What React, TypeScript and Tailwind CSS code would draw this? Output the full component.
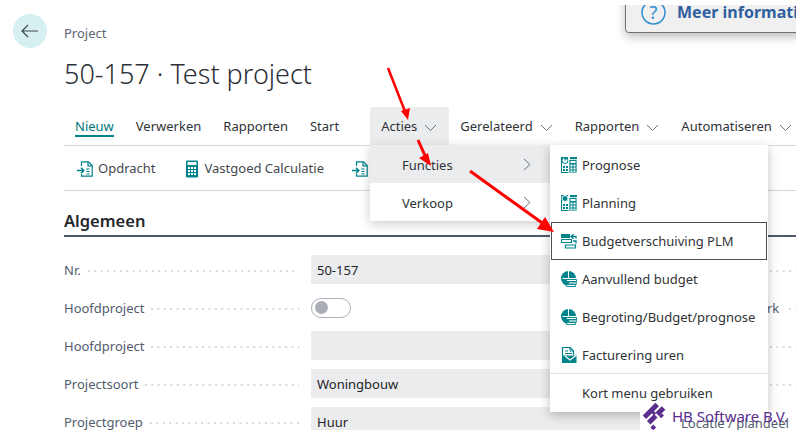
import React from "react";

const teal = "#00838a";

const DocArrow = () => (
  <svg width="16" height="16" viewBox="0 0 16 16" fill="none" stroke={teal} strokeWidth="1.2">
    <path d="M4.5 5V0.8h7l3.7 3.7v10.7H4.5V13" />
    <path d="M11 0.8v4h4.2" />
    <path d="M0 9.5h6.5M4 6.8l2.8 2.7L4 12.2" strokeWidth="1.5" />
    <path d="M9 8h3.5M9.5 10.5h3M9.5 13h3" />
  </svg>
);

const Calculator = () => (
  <svg width="16" height="18" viewBox="0 0 16 18">
    <rect x="2" y="0.5" width="12" height="17" rx="1" fill={teal} />
    <rect x="3.5" y="2" width="9" height="3" fill="#fff" />
    <path d="M4 7h2v2H4zM7 7h2v2H7zM10 7h2v2h-2zM4 10h2v2H4zM7 10h2v2H7zM10 10h2v2h-2zM4 13h2v2H4zM7 13h2v2H7zM10 13h2v2h-2z" fill="#fff" />
  </svg>
);

const Chart = ({ solid }: { solid?: boolean }) => (
  <svg width="16" height="16" viewBox="0 0 16 16">
    <rect x="0.5" y="0.5" width="9" height="15" fill="none" stroke={teal} />
    <rect x="0" y="0" width="16" height="6" fill={teal} />
    <rect x="7" y="0" width="2" height="6" fill="#fff" />
    <circle cx="4" cy="3.5" r="3" fill={solid ? teal : "#fff"} stroke={solid ? "#fff" : teal} strokeWidth="1" />
    {!solid && <path d="M4 3.5V0.5H7" stroke={teal} fill={teal} />}
    <path d="M2 9h2v2H2zM5 9h2v2H5zM2 12h2v2H2zM5 12h2v2H5z" fill={teal} />
    <rect x="8" y="2.5" width="8" height="13.5" fill={teal} stroke="#fff" strokeWidth="0.8" />
    <rect x="9.5" y="4" width="5" height="2" fill="#fff" />
    <path d="M9.5 7.5h2v2h-2zM12.5 7.5h2v2h-2zM9.5 10.5h2v2h-2zM12.5 10.5h2v2h-2zM9.5 13.5h2v1.5h-2zM12.5 13.5h2v1.5h-2z" fill="#fff" />
  </svg>
);

const Shift = () => (
  <svg width="16" height="16" viewBox="0 0 16 16" fill="none" stroke={teal}>
    <rect x="0.5" y="1.5" width="8" height="3" fill={teal} />
    <path d="M0.5 6.5h10v3h-10z" strokeWidth="1.2" />
    <path d="M4.5 12h10v3h-10z" strokeWidth="1.2" />
    <path d="M15 5.5V3.5h-4M12.5 1.2L10 3.5l2.5 2.3" strokeWidth="1.3" />
    <path d="M12 8h3v2.5" strokeWidth="1.3" />
  </svg>
);

const Pie = () => (
  <svg width="16" height="16" viewBox="0 0 16 16">
    <circle cx="7.5" cy="7.5" r="7.5" fill={teal} />
    <path d="M7.5 0v7.5H15M7.5 7.5L1.5 7.5" stroke="#fff" fill="none" />
    <path d="M5.5 8.5h10v2h-10zM7.5 11h8.5v2h-8.5zM5.5 13.5h9v2h-9z" fill="#fff" stroke={teal} strokeWidth="0.9" />
  </svg>
);

const Invoice = () => (
  <svg width="16" height="17" viewBox="0 0 16 17" fill="none" stroke={teal}>
    <path d="M1.5 16V0.5h7.5l3.5 3.5v4" strokeWidth="1.2" />
    <path d="M9 0.5V4h3.5M4 4h3M4 6.5h7" />
    <path d="M3 8.5h12.5V16H1.5V8.5z" fill={teal} stroke="none" />
    <path d="M4 9l5 4 6-4.5" stroke="#fff" strokeWidth="1.1" />
  </svg>
);

const Chevron = () => (
  <svg width="13" height="13" viewBox="0 0 13 13" fill="none" stroke="#6b7280" strokeWidth="1">
    <path d="M1 4l5.5 5.5L12 4" />
  </svg>
);

const Arrow = () => (
  <svg width="8" height="13" viewBox="0 0 8 13" fill="none" stroke="#6b7280">
    <path d="M1 1l6 5.5L1 12" />
  </svg>
);

const Tab = ({ label, active, menu, open }: { label: string; active?: boolean; menu?: boolean; open?: boolean }) => (
  <div className={`h-[38px] pt-[2px] flex items-center gap-[7px] px-[11px] rounded-t-[3px] ${open ? "bg-[#ebecee] pr-[12px]" : ""}`}>
    <span className={`relative ${active ? "text-[#00767c]" : "text-[#2f3338]"}`}>
      {label}
      {active && <span className="absolute left-0 right-0 top-[18px] h-[2px] bg-[#00838a]" />}
    </span>
    {menu && <Chevron />}
  </div>
);

const Action = ({ icon, label }: { icon: React.ReactNode; label: string }) => (
  <div className="flex items-center gap-[5px] text-[#44484e]">
    <span className="w-[16px] flex justify-center">{icon}</span>
    <span>{label}</span>
  </div>
);

const Dots = ({ className }: { className: string }) => (
  <span className={`h-[2px] bg-[linear-gradient(to_right,#d5d7da_2px,transparent_2px)] bg-[length:6.4px_2px] ${className}`} />
);

const Field = ({ label, value, toggle, right, rightDots }: { label: string; value?: string; toggle?: boolean; right?: string; rightDots?: boolean }) => (
  <div className="h-[29px] flex items-center">
    <div className="w-[247px] flex items-center shrink-0 pr-[12px] text-[#505c6d]">
      <span className="whitespace-nowrap pt-[2px]">{label}</span>
      <Dots className="flex-1 ml-[7px] mt-[3px]" />
    </div>
    {toggle ? (
      <div className="w-[349px] shrink-0">
        <div className="w-[40px] h-[20px] rounded-full border border-[#a9aeb7] flex items-center px-[3px] bg-white">
          <span className="w-[13px] h-[13px] rounded-full bg-[#a9aeb7]" />
        </div>
      </div>
    ) : (
      <div className="w-[349px] h-[29px] pt-[2px] shrink-0 bg-[#ebecee] px-[6px] flex items-center text-[#1f2328]">{value}</div>
    )}
    {right && <span className="ml-[107px] pt-[2px] text-[#505c6d]">{right}</span>}
    {rightDots && <Dots className="ml-[110px] w-[30px] mt-[3px]" />}
    {right && <Dots className="ml-[10px] w-[10px] mt-[3px]" />}
  </div>
);

const SubItem = ({ icon, label, focused }: { icon?: React.ReactNode; label: string; focused?: boolean }) => (
  <div className={`h-[38px] flex items-center gap-[5px] pl-[10px] text-[#2f3338] ${focused ? "outline outline-1 outline-[#4b4f54] -outline-offset-1 bg-white" : ""}`}>
    <span className="w-[16px] flex justify-center">{icon}</span>
    <span className="pt-[1px]">{label}</span>
  </div>
);

export default function App() {
  return (
    <div className="w-[801px] h-[435px] bg-white overflow-hidden">
      <div className="relative w-[796px] h-[430px] overflow-hidden bg-white flex text-[13px] font-['Noto_Sans','Open_Sans',sans-serif]">
        <div className="w-[64px] shrink-0 pl-[13px] pt-[14px]">
          <div className="w-[34px] h-[34px] rounded-full bg-[#d6eff1] flex items-center justify-center">
            <svg width="18" height="14" viewBox="0 0 18 14" fill="none" stroke="#3f4650" strokeWidth="1.2">
              <path d="M1 7h16M7 1L1 7l6 6" />
            </svg>
          </div>
        </div>

        <div className="flex-1 min-w-0 pt-[24px]">
          <div className="h-[18px] leading-[18px] text-[#5c6675]">Project</div>
          <h1 className="mt-[12px] h-[40px] leading-[40px] text-[27px] font-light text-[#2d3035] whitespace-nowrap">50-157 · Test project</h1>

          <div className="mt-[13px] h-[38px] flex items-center border-b border-[#d3d5d9] box-content">
            <Tab label="Nieuw" active />
            <Tab label="Verwerken" />
            <Tab label="Rapporten" />
            <Tab label="Start" />
            <span className="ml-[10px] mr-[10px] w-px h-[23px] bg-[#b9bcc1]" />
            <Tab label="Acties" menu open />
            <Tab label="Gerelateerd" menu />
            <Tab label="Rapporten" menu />
            <Tab label="Automatiseren" menu />
          </div>

          <div className="h-[45px] pt-[2px] flex items-center gap-[28px] pl-[13px] border-b border-[#d3d5d9] whitespace-nowrap">
            <Action icon={<DocArrow />} label="Opdracht" />
            <Action icon={<Calculator />} label="Vastgoed Calculatie" />
            <Action icon={<DocArrow />} label="Opdracht" />
          </div>

          <div className="mt-[18px] h-[24px] leading-[24px] text-[16.5px] font-semibold text-[#26282c]">Algemeen</div>
          <div className="h-[2px] mt-[2px] bg-[#505a6b]" />

          <div className="mt-[18px] flex flex-col gap-[9px] whitespace-nowrap">
            <Field label="Nr." value="50-157" rightDots />
            <Field label="Hoofdproject" toggle right="rk" />
            <Field label="Hoofdproject" rightDots />
            <Field label="Projectsoort" value="Woningbouw" rightDots />
            <Field label="Projectgroep" value="Huur" />
          </div>
        </div>

        {/* melding rechtsboven */}
        <div className="absolute left-[625px] top-[-8px] w-[200px] h-[41px] pl-[15px] pb-[8px] flex items-end gap-[11px] bg-[#f0f0f0] border border-[#6f7378] rounded-[4px] shadow-[0_4px_10px_rgba(0,0,0,0.25)]">
          <svg width="25" height="25" viewBox="0 0 25 25" fill="none" className="mb-[-1px]">
            <circle cx="12.5" cy="12.5" r="11.5" stroke="#2f8fd0" strokeWidth="1.5" />
            <text x="12.5" y="19" textAnchor="middle" fontSize="18" fill="#2f8fd0">?</text>
          </svg>
          <span className="text-[16px] font-bold text-[#2f5f9e] whitespace-nowrap leading-[24px]">Meer informatie</span>
        </div>
        <div className="absolute left-[600px] top-0 w-[196px] h-[5px] bg-white" />

        {/* Acties menu */}
        <div className="absolute left-[370px] top-[145px] w-[180px] bg-white shadow-[0_3px_10px_rgba(0,0,0,0.2)] text-[#2f3338]">
          <div className="h-[38px] bg-[#ebecee] flex items-center justify-between pl-[32px] pr-[19px]">
            <span className="pt-[4px]">Functies</span>
            <Arrow />
          </div>
          <div className="h-[38px] flex items-center justify-between pl-[32px] pr-[19px]">
            <span className="pt-[4px]">Verkoop</span>
            <Arrow />
          </div>
        </div>

        {/* Functies submenu */}
        <div className="absolute left-[550px] top-[145px] w-[218px] h-[267px] bg-white shadow-[0_3px_10px_rgba(0,0,0,0.25)] pt-[1px] px-[1px] whitespace-nowrap">
          <SubItem icon={<Chart />} label="Prognose" />
          <SubItem icon={<Chart solid />} label="Planning" />
          <SubItem icon={<Shift />} label="Budgetverschuiving PLM" focused />
          <SubItem icon={<Pie />} label="Aanvullend budget" />
          <SubItem icon={<Pie />} label="Begroting/Budget/prognose" />
          <SubItem icon={<Invoice />} label="Facturering uren" />
          <div className="h-px -mt-[1px] bg-[#e3e4e6] -mx-[1px]" />
          <SubItem label="Kort menu gebruiken" />
        </div>

        {/* watermerk */}
        <div className="absolute left-[640px] top-[412px] w-[156px] h-[18px] bg-white" />
        <span className="absolute left-[681px] top-[414px] text-[#505c6d] whitespace-nowrap">Locatie / plandeel</span>
        <svg className="absolute left-[641px] top-[402px]" width="27" height="28" viewBox="0 0 27 28" fill="#5b2d8e">
          <g transform="rotate(45 13 12)">
            <rect x="6" y="3" width="5" height="18" />
            <rect x="13" y="1" width="5" height="9" />
            <rect x="13" y="12" width="5" height="10" />
            <rect x="10" y="10" width="4" height="3" />
            <rect x="18" y="6" width="3" height="4" />
            <rect x="20" y="20" width="4" height="4" />
          </g>
        </svg>
        <span className="absolute left-[672px] top-[405px] text-[15px] text-[#5b2d8e] whitespace-nowrap">HB Software B.V.</span>

        {/* rode pijlen */}
        <svg className="absolute inset-0 pointer-events-none" width="796" height="430" viewBox="0 0 796 430" fill="#ff0000" stroke="none">
          <path d="M388 68l18 46" stroke="#ff0000" strokeWidth="2.5" fill="none" />
          <path d="M408 120l-7-9 9-3z" />
          <path d="M418 140l9 20" stroke="#ff0000" strokeWidth="3" fill="none" />
          <path d="M431 166l-12-8 9-5z" />
          <path d="M470 171l75 54" stroke="#ff0000" strokeWidth="3" fill="none" />
          <path d="M554 232l-17-3 8-12z" />
        </svg>
      </div>
    </div>
  );
}
